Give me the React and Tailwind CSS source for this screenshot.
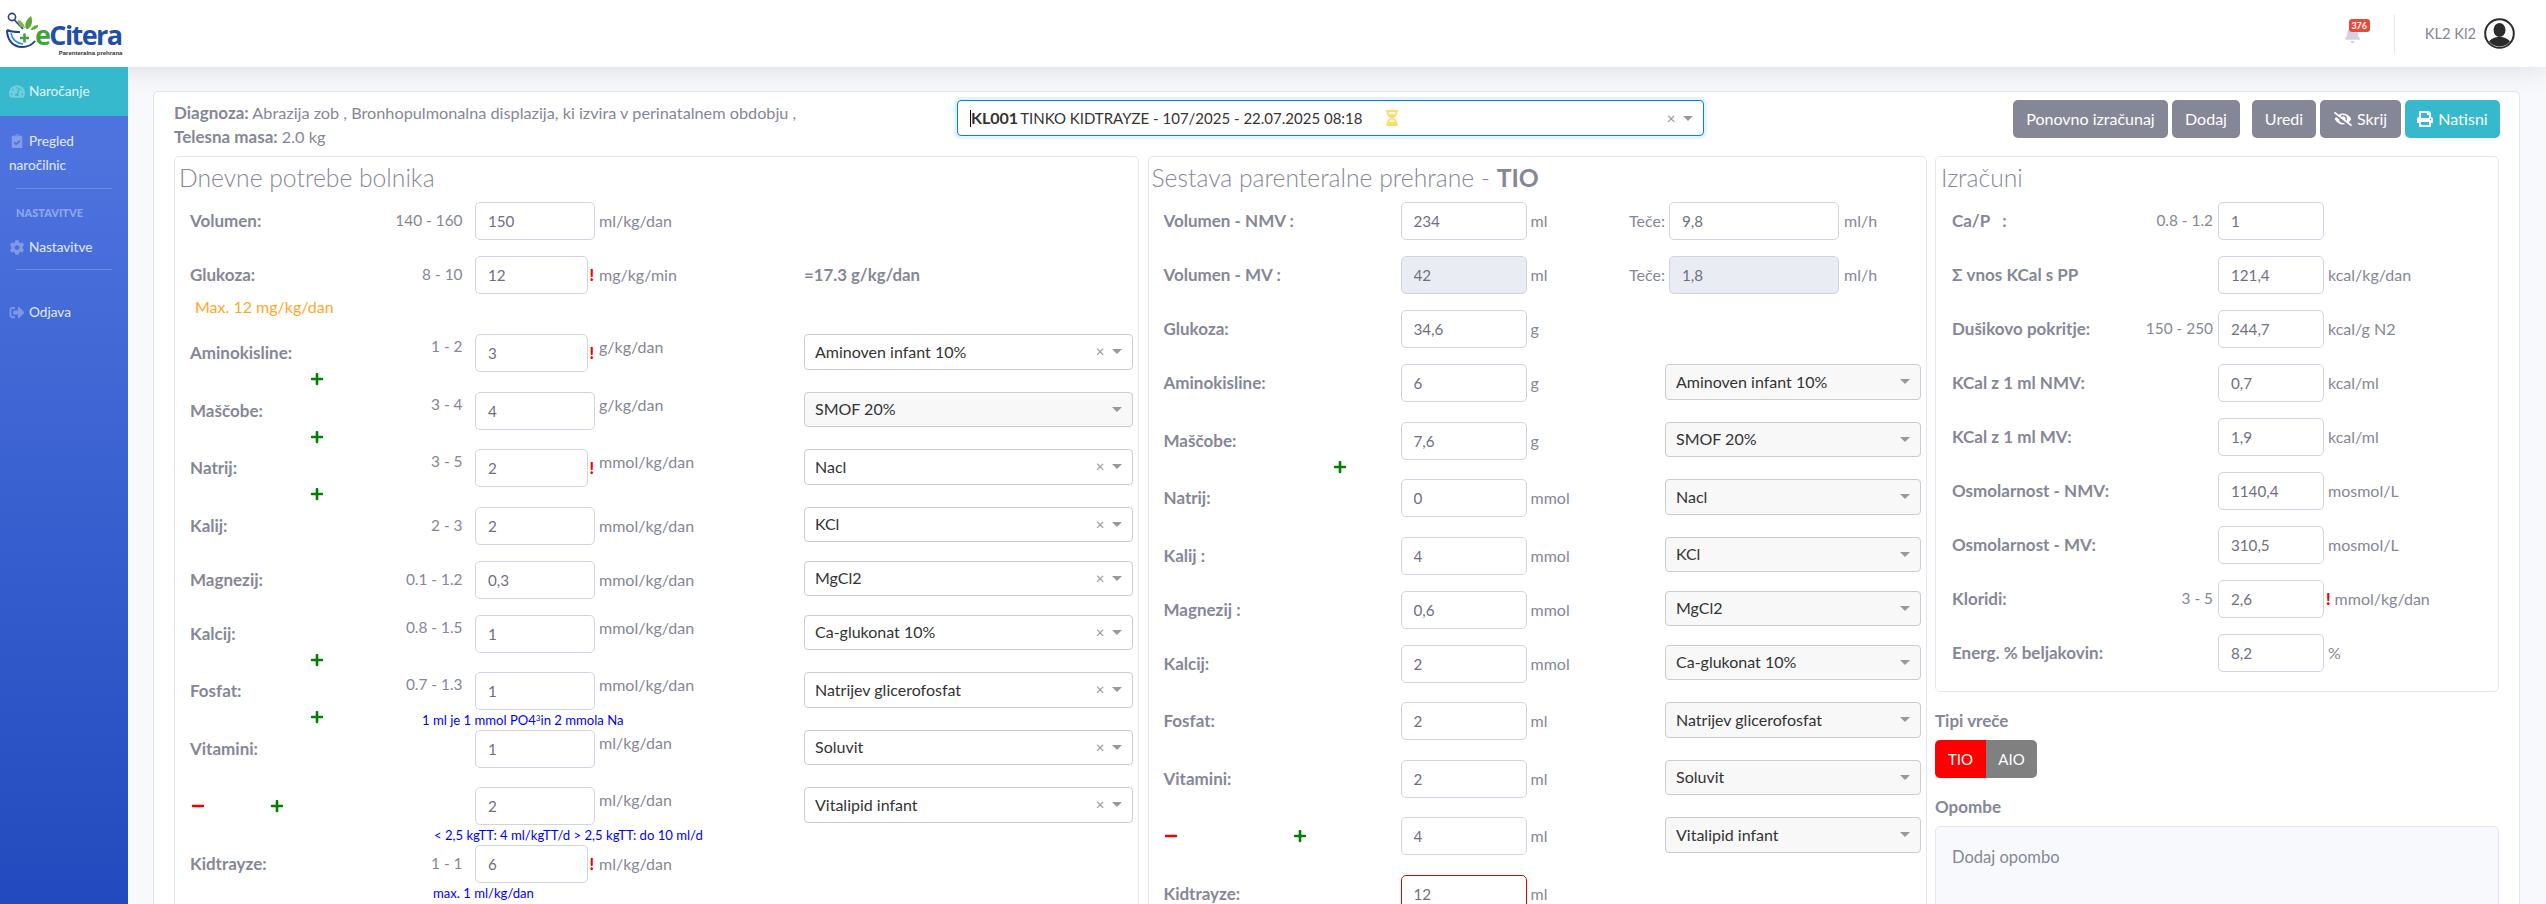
import { FaBell, FaClipboardCheck, FaCog, FaEyeSlash, FaHourglassHalf, FaMinus, FaPlus, FaPrint, FaSignOutAlt, FaTachometerAlt } from 'react-icons/fa';

const PlusIcon = ({ className = '' }) => <FaPlus size={14} className={`shrink-0 text-[#008000] ${className}`} />;
const MinusIcon = ({ className = '' }) => <FaMinus size={14} className={`shrink-0 text-[#f00000] ${className}`} />;

function Logo() {
  return (
    <div className="flex items-start ml-[6px] mt-[12px] h-[42px]">
      <svg width="32" height="38" viewBox="0 0 32 38" className="shrink-0">
        <circle cx="6" cy="5" r="3.6" fill="none" stroke="#27408f" strokeWidth="1.6" />
        <path d="M8.5 8 L17 17" stroke="#27408f" strokeWidth="1.8" />
        <path d="M20 17 C18 12 20 8 25 4 C27 9 26 14 22 17Z" fill="#5fa83a" />
        <path d="M15 15 C12 12 12 10 12 8 C16 9 18 12 19 16Z" fill="#79b944" />
        <path d="M25 17 C27 14 30 13 33 13 C31 16 29 18 25 18Z" fill="#5fa83a" />
        <path d="M1 18 C5 20 10 20 14 20 M1 18 C1 28 7 35 16 35 C22 35 26 33 29 29" fill="none" stroke="#27408f" strokeWidth="2" />
        <path d="M5 21 C6 27 10 31 17 32" fill="none" stroke="#1f9ad6" strokeWidth="1.6" />
        <path d="M14 26 H23 M18.500 21.500 V30.500" stroke="#3fa535" strokeWidth="2.600" />
      </svg>
      <div className="ml-[-3px] mt-[7px] flex flex-col items-end">
        <div className="font-['Open_Sans',sans-serif] text-[27px] leading-[32px] font-bold tracking-[-1.6px] text-[#1f4fa8]">
          <span className="text-[#3fa535]">e</span>Citera
        </div>
        <div className="font-['Liberation_Sans',sans-serif] text-[6px] leading-[6px] font-bold text-[#333] mr-[-1px] mt-[-1px]">Parenteralna prehrana</div>
      </div>
    </div>
  );
}

function Header() {
  return (
    <header className="relative z-10 h-[67px] shrink-0 bg-white flex shadow-[0_2px_28px_0_rgba(58,59,69,0.15)]">
      <Logo />
      <div className="ml-auto flex items-center pr-[31px]">
        <div className="relative w-[26px] h-[20px] mt-[-2px] mr-[24px]">
          <FaBell size={17} className="text-[#d1d3e2] mt-[3px]" />
          <span className="absolute left-[5px] top-[-4px] w-[21px] h-[13px] rounded-[3px] bg-[#e74a3b] text-white text-[9px] leading-[13px] font-bold text-center">376</span>
        </div>
        <div className="w-px h-[38px] bg-[#e3e6f0] mr-[30px]" />
        <span className="text-[#858796] text-[14.700px] mr-[8px]">KL2 Kl2</span>
        <svg width="31" height="31" viewBox="0 0 31 31">
          <defs>
            <clipPath id="avatar-clip"><circle cx="15.500" cy="15.500" r="13" /></clipPath>
          </defs>
          <circle cx="15.500" cy="15.500" r="14.300" fill="#fff" stroke="#2b2b2b" strokeWidth="2" />
          <g clipPath="url(#avatar-clip)" fill="#2b2b2b">
            <ellipse cx="15.500" cy="12" rx="6" ry="7" />
            <path d="M3 31 C3 22 9 19 15.500 19 C22 19 28 22 28 31Z" />
          </g>
        </svg>
      </div>
    </header>
  );
}

function NavItem({ icon: Icon, children, className = '' }) {
  return (
    <div className={`flex items-center pl-[9px] text-white/85 text-[13.600px] ${className}`}>
      <Icon size={15} className="text-white/30 w-[16px] mr-[4px] shrink-0" />
      <span>{children}</span>
    </div>
  );
}

function Sidebar() {
  return (
    <aside className="relative z-20 w-[128px] shrink-0 bg-linear-to-b from-[#4e73df] from-10% to-[#224abe] flex flex-col">
      <NavItem icon={FaTachometerAlt} className="h-[49px] bg-[#36b9cc] text-white/85">Naročanje</NavItem>
      <div className="pl-[9px] pt-[13px] text-white/85 text-[13.600px] leading-[24px]">
        <FaClipboardCheck size={14} className="inline text-white/30 w-[16px] mr-[4px] align-[-2px]" />
        Pregled
        <br />
        naročilnic
      </div>
      <div className="h-px bg-white/20 mx-[16px] mt-[11px]" />
      <div className="pl-[16px] mt-[17px] h-[14px] text-[11px] leading-[14px] font-black text-white/40">NASTAVITVE</div>
      <NavItem icon={FaCog} className="mt-[15px] h-[24px]">Nastavitve</NavItem>
      <div className="h-px bg-white/20 mx-[16px] mt-[10px]" />
      <NavItem icon={FaSignOutAlt} className="mt-[30px] h-[24px]">Odjava</NavItem>
    </aside>
  );
}

function NgSelect({ value, clear = true, grey = false, className = '' }) {
  return (
    <div className={`h-[35.500px] rounded-[4px] border border-[#ccc] flex items-center pl-[10px] shrink-0 ${grey ? 'bg-[#f8f8f8]' : 'bg-white'} ${className}`}>
      <span className="text-[#333] text-[16px] flex-1 truncate">{value}</span>
      {clear && <span className="text-[#999] text-[15px] leading-none w-[14px] text-center mr-[5px]">×</span>}
      <span className="w-0 h-0 border-x-[5px] border-x-transparent border-t-[5px] border-t-[#999] mr-[10px]" />
    </div>
  );
}

function Field({ value, width, error, disabled }) {
  return (
    <input
      readOnly
      value={value}
      className={`h-[38px] shrink-0 rounded-[5px] border px-[12px] text-[15.200px] text-[#6e707e] outline-none ${width} ${error ? 'border-[#e00000]' : 'border-[#d1d3e2]'} ${disabled ? 'bg-[#eaecf4]' : 'bg-white'}`}
    />
  );
}

const Mark = () => <span className="text-[#f00000] font-black text-[16px] w-[7px] shrink-0 leading-none">!</span>;

function NeedRow({ label, range, value, unit, select, grey, warn, high, sub, subH = 'h-[16px]', extra }) {
  return (
    <div className="ml-[15px]">
      <div className="flex items-center">
        <div className="w-[180px] shrink-0 font-bold text-[17px] flex items-center">{label}</div>
        <div className={`w-[92.500px] shrink-0 text-right text-[15.400px] ${high ? 'mb-3' : ''}`}>{range}</div>
        <div className="w-[119.500px] ml-[12.500px] shrink-0 flex items-center">
          <Field value={value} width={warn ? 'w-[113px]' : 'w-[119.500px]'} />
          {warn && <span className="ml-[1.500px]"><Mark /></span>}
        </div>
        <div className={`w-[209.500px] pl-[4.500px] shrink-0 text-[16px] ${high ? 'mb-3' : ''}`}>{unit}</div>
        {select && <NgSelect value={select} clear={!grey} grey={grey} className="w-[329px] self-start" />}
        {extra}
      </div>
      <div className={`${subH} flex items-start`}>{sub}</div>
    </div>
  );
}

function NeedsPanel() {
  return (
    <section className="w-[965px] shrink-0 border border-[#e3e6f0] rounded-[5px] bg-white">
      <h2 className="ml-[4px] pt-[6px] mb-[10px] text-[24.700px] leading-[29px] font-light text-[#858796]">Dnevne potrebe bolnika</h2>
      <NeedRow label="Volumen:" range="140 - 160" value="150" unit="ml/kg/dan" />
      <NeedRow
        label="Glukoza:"
        range="8 - 10"
        value="12"
        warn
        unit="mg/kg/min"
        subH="h-[40px]"
        extra={<span className="font-bold text-[16.800px]">=17.3 g/kg/dan</span>}
        sub={<span className="ml-[5px] mt-[3px] leading-[20px] text-[16px] text-[#ffa726]">Max. 12 mg/kg/dan</span>}
      />
      <NeedRow label="Aminokisline:" range="1 - 2" value="3" warn unit="g/kg/dan" select="Aminoven infant 10%" high subH="h-[19.500px]" sub={<PlusIcon className="ml-[120px]" />} />
      <NeedRow label="Maščobe:" range="3 - 4" value="4" unit="g/kg/dan" select="SMOF 20%" grey high subH="h-[19.500px]" sub={<PlusIcon className="ml-[120px]" />} />
      <NeedRow label="Natrij:" range="3 - 5" value="2" warn unit="mmol/kg/dan" select="Nacl" high subH="h-[19.500px]" sub={<PlusIcon className="ml-[120px]" />} />
      <NeedRow label="Kalij:" range="2 - 3" value="2" unit="mmol/kg/dan" select="KCl" />
      <NeedRow label="Magnezij:" range="0.1 - 1.2" value="0,3" unit="mmol/kg/dan" select="MgCl2" />
      <NeedRow label="Kalcij:" range="0.8 - 1.5" value="1" unit="mmol/kg/dan" select="Ca-glukonat 10%" high subH="h-[19.500px]" sub={<PlusIcon className="ml-[120px]" />} />
      <NeedRow
        label="Fosfat:"
        range="0.7 - 1.3"
        value="1"
        unit="mmol/kg/dan"
        select="Natrijev glicerofosfat"
        high
        subH="h-[19.500px]"
        sub={
          <>
            <PlusIcon className="ml-[120px]" />
            <span className="ml-[98px] mt-[1px] text-[13.100px] leading-[19px] text-[#0000ff] whitespace-nowrap">1 ml je 1 mmol PO4<sup className="text-[8px]">3</sup>in 2 mmola Na</span>
          </>
        }
      />
      <NeedRow label="Vitamini:" value="1" unit="ml/kg/dan" select="Soluvit" high subH="h-[19.500px]" />
      <NeedRow
        label={
          <>
            <MinusIcon className="ml-[1px]" />
            <PlusIcon className="ml-[65px]" />
          </>
        }
        value="2"
        unit="ml/kg/dan"
        select="Vitalipid infant"
        high
        subH="h-[19.500px]"
        sub={<span className="ml-[244px] mt-[1px] text-[13.100px] leading-[19px] text-[#0000ff] whitespace-nowrap">{'< 2,5 kgTT: 4 ml/kgTT/d > 2,5 kgTT: do 10 ml/d'}</span>}
      />
      <NeedRow
        label="Kidtrayze:"
        range="1 - 1"
        value="6"
        warn
        unit="ml/kg/dan"
        subH="h-[40px]"
        sub={<span className="ml-[243px] mt-[1px] text-[13.100px] leading-[19px] text-[#0000ff]">max. 1 ml/kg/dan</span>}
      />
    </section>
  );
}

function MixRow({ label, value, unit, select, flow, flowDisabled, disabled, error, sub, subH = 'h-[16px]' }) {
  return (
    <div className="ml-[15px]">
      <div className="flex items-center">
        <div className="w-[237px] shrink-0 font-bold text-[17px] flex items-center">{label}</div>
        <Field value={value} width="w-[126px]" disabled={disabled} error={error} />
        <div className={`${flow ? 'w-[100px]' : 'w-[138.500px]'} pl-[4px] shrink-0 text-[16px]`}>{unit}</div>
        {select && <NgSelect value={select} clear={false} grey className="w-[256px] self-start" />}
        {flow && (
          <>
            <span className="w-[38.500px] mr-[4px] text-right text-[16px] whitespace-nowrap">Teče:</span>
            <Field value={flow} width="w-[170px]" disabled={flowDisabled} />
            <span className="pl-[5px] text-[16px]">ml/h</span>
          </>
        )}
      </div>
      <div className={`${subH} flex items-start`}>{sub}</div>
    </div>
  );
}

function MixPanel() {
  return (
    <section className="w-[779px] shrink-0 border border-[#e3e6f0] rounded-[5px] bg-white">
      <h2 className="ml-[3px] pt-[6px] mb-[10px] text-[24.700px] leading-[29px] font-light text-[#858796]">
        Sestava parenteralne prehrane - <b className="font-bold">TIO</b>
      </h2>
      <MixRow label="Volumen - NMV :" value="234" unit="ml" flow="9,8" />
      <MixRow label="Volumen - MV :" value="42" unit="ml" flow="1,8" disabled flowDisabled />
      <MixRow label="Glukoza:" value="34,6" unit="g" />
      <MixRow label="Aminokisline:" value="6" unit="g" select="Aminoven infant 10%" subH="h-[19.500px]" />
      <MixRow label="Maščobe:" value="7,6" unit="g" select="SMOF 20%" subH="h-[19.500px]" sub={<PlusIcon className="ml-[169px]" />} />
      <MixRow label="Natrij:" value="0" unit="mmol" select="Nacl" subH="h-[19.500px]" />
      <MixRow label="Kalij :" value="4" unit="mmol" select="KCl" />
      <MixRow label="Magnezij :" value="0,6" unit="mmol" select="MgCl2" />
      <MixRow label="Kalcij:" value="2" unit="mmol" select="Ca-glukonat 10%" subH="h-[19.500px]" />
      <MixRow label="Fosfat:" value="2" unit="ml" select="Natrijev glicerofosfat" subH="h-[19.500px]" />
      <MixRow label="Vitamini:" value="2" unit="ml" select="Soluvit" subH="h-[19.500px]" />
      <MixRow
        label={
          <>
            <MinusIcon />
            <PlusIcon className="ml-[115px]" />
          </>
        }
        value="4"
        unit="ml"
        select="Vitalipid infant"
        subH="h-[19.500px]"
      />
      <MixRow label="Kidtrayze:" value="12" unit="ml" error />
    </section>
  );
}

function CalcRow({ label, range, value, unit, warn }) {
  return (
    <div className="ml-[16px] h-[54px] flex items-start">
      <div className="h-[38px] flex items-center w-[170px] shrink-0 font-bold text-[17px] whitespace-nowrap">{label}</div>
      <div className="h-[38px] flex items-center justify-end w-[91px] shrink-0 text-[15.400px]">{range}</div>
      <Field value={value} width="w-[106px] ml-[5px]" />
      <div className="h-[38px] flex items-center pl-[4px] text-[16px]">
        {warn && <span className="ml-[-2px] mr-[4px]"><Mark /></span>}
        {unit}
      </div>
    </div>
  );
}

function CalcColumn() {
  return (
    <div className="w-[564px] shrink-0">
      <section className="border border-[#e3e6f0] rounded-[5px] bg-white pb-[3px]">
        <h2 className="ml-[5px] pt-[6px] mb-[10px] text-[24.700px] leading-[29px] font-light text-[#858796]">Izračuni</h2>
        <CalcRow label={<>Ca/P &nbsp; :</>} range="0.8 - 1.2" value="1" />
        <CalcRow label="Σ vnos KCal s PP" value="121,4" unit="kcal/kg/dan" />
        <CalcRow label="Dušikovo pokritje:" range="150 - 250" value="244,7" unit="kcal/g N2" />
        <CalcRow label="KCal z 1 ml NMV:" value="0,7" unit="kcal/ml" />
        <CalcRow label="KCal z 1 ml MV:" value="1,9" unit="kcal/ml" />
        <CalcRow label="Osmolarnost - NMV:" value="1140,4" unit="mosmol/L" />
        <CalcRow label="Osmolarnost - MV:" value="310,5" unit="mosmol/L" />
        <CalcRow label="Kloridi:" range="3 - 5" value="2,6" unit="mmol/kg/dan" warn />
        <CalcRow label="Energ. % beljakovin:" value="8,2" unit="%" />
      </section>
      <div className="mt-[17px] font-bold text-[17px] leading-[24px]">Tipi vreče</div>
      <div className="mt-[7px] flex w-[102px] h-[38px] rounded-[5px] overflow-hidden text-white text-[15px]">
        <button className="w-[51px] bg-[#ff0000]">TIO</button>
        <button className="w-[51px] bg-[#808080]">AIO</button>
      </div>
      <div className="mt-[17px] font-bold text-[17px] leading-[24px]">Opombe</div>
      <textarea
        placeholder="Dodaj opombo"
        className="mt-[7px] block w-full h-[130px] rounded-[5px] border border-[#e3e6f0] bg-[#f8f9fc] px-[16px] pt-[18px] text-[16.500px] outline-none resize-none placeholder:text-[#858796]"
      />
    </div>
  );
}

function ActionButton({ children, width, teal }) {
  return (
    <button className={`h-[38px] rounded-[5px] text-white text-[16px] flex items-center justify-center gap-[5px] shrink-0 ${width} ${teal ? 'bg-[#36b9cc]' : 'bg-[#858796]'}`}>
      {children}
    </button>
  );
}

function TopRow() {
  return (
    <div className="flex items-start h-[55px] mr-[-1px]">
      <div className="w-[783px] shrink-0 text-[16.250px] leading-[24px]">
        <div><b className="font-bold text-[17px]">Diagnoza:</b> Abrazija zob , Bronhopulmonalna displazija, ki izvira v perinatalnem obdobju ,</div>
        <div><b className="font-bold text-[17px]">Telesna masa:</b> 2.0 kg</div>
      </div>
      <div className="w-[747px] h-[36px] mt-[-1px] rounded-[4px] border border-[#007eff] shadow-[0_0_0_3px_rgba(0,126,255,0.1)] bg-white flex items-center pl-[12px] text-[#333] text-[15px]">
        <span className="w-px h-[17px] bg-black" />
        <b className="font-bold text-[16px]">KL001</b>
        <span className="ml-[2px]">TINKO KIDTRAYZE - 107/2025 - 22.07.2025 08:18</span>
        <FaHourglassHalf size={16} className="ml-[21px] text-[#ffdc6a]" />
        <span className="ml-auto text-[#999] text-[15px] leading-none w-[14px] text-center mr-[5px]">×</span>
        <span className="w-0 h-0 border-x-[5px] border-x-transparent border-t-[5px] border-t-[#999] mr-[10px]" />
      </div>
      <div className="ml-auto flex mt-[-1px]">
        <ActionButton width="w-[155px]">Ponovno izračunaj</ActionButton>
        <div className="w-[4px]" />
        <ActionButton width="w-[68px]">Dodaj</ActionButton>
        <div className="w-[12px]" />
        <ActionButton width="w-[64px]">Uredi</ActionButton>
        <div className="w-[4px]" />
        <ActionButton width="w-[81px]"><FaEyeSlash size={18} /> Skrij</ActionButton>
        <div className="w-[4px]" />
        <ActionButton width="w-[95px]" teal><FaPrint size={16} /> Natisni</ActionButton>
      </div>
    </div>
  );
}

export default function App() {
  return (
    <div className="h-screen overflow-hidden flex flex-col bg-[#f8f9fc] font-['Lato',sans-serif] text-[#858796]">
      <Header />
      <div className="flex flex-1 min-h-0">
        <Sidebar />
        <main className="flex-1 min-w-0 pl-[25px] pr-[26px] pt-[24px]">
          <div className="border border-[#e3e6f0] rounded-[5px] bg-white px-[20px] pt-[9px] min-h-[900px]">
            <TopRow />
            <div className="flex gap-[8.500px]">
              <NeedsPanel />
              <MixPanel />
              <CalcColumn />
            </div>
          </div>
        </main>
      </div>
    </div>
  );
}
